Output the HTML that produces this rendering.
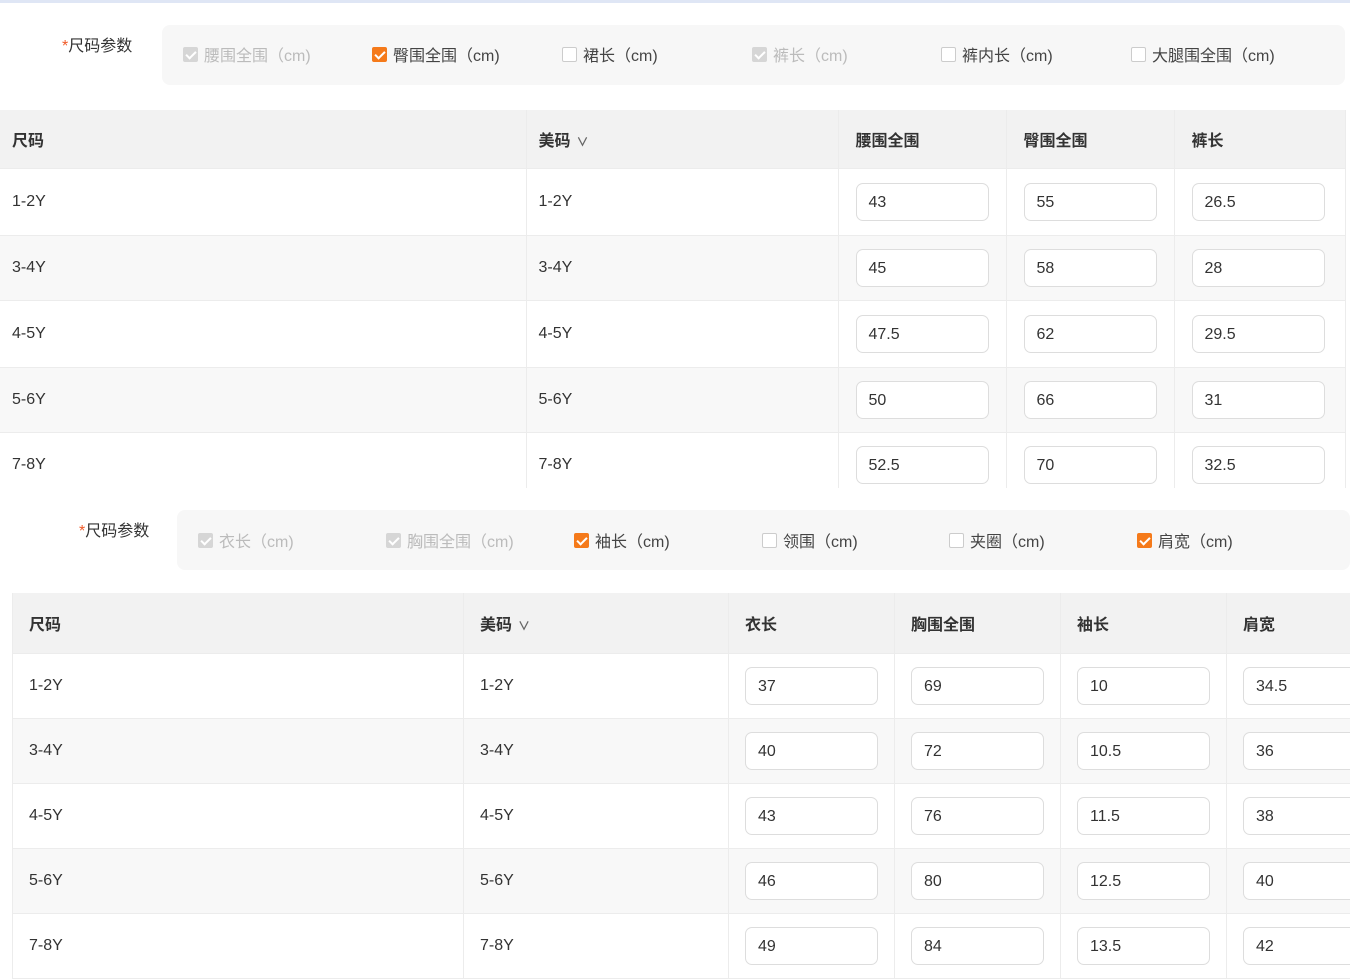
<!DOCTYPE html>
<html><head><meta charset="utf-8"><style>
*{margin:0;padding:0;box-sizing:border-box}
body{width:1350px;height:965px;overflow:hidden;background:#fff;font-family:"Liberation Sans","Noto Sans CJK SC",sans-serif;color:#333;position:relative}
.a{position:absolute}
.lbl{font-size:16px;color:#333}
.lbl b{color:#f05a28;font-weight:normal}
.band{background:#f7f7f7;border-radius:8px}
.cb{position:absolute;font-size:16px;color:#444;display:flex;align-items:center;white-space:nowrap}
.cb i{display:inline-block;width:15px;height:15px;border:1px solid #ccc;border-radius:2px;background:#fff;margin-right:6px;position:relative}
.cb.dis{color:#bbb}.cb.dis i{background:#d6d6d6;border-color:#d6d6d6}
.cb.on i{background:#f57a1a;border-color:#f57a1a}
.cb.on i:after,.cb.dis i:after{content:"";position:absolute;left:4px;top:1px;width:4px;height:8px;border:solid #fff;border-width:0 2px 2px 0;transform:rotate(45deg)}
table{position:absolute;border-collapse:collapse;table-layout:fixed;font-size:16px}
td,th{border-right:1px solid #ececec;border-bottom:1px solid #ececec;text-align:left;padding-left:12px;color:#333}
th{background:#f2f2f2;font-weight:bold;font-size:16px}
tr.g td{background:#f8f8f8}
.in{width:133px;height:38px;border:1px solid #ddd;border-radius:7px;background:#fff;padding-left:12px;line-height:38px;font-size:16px}
.ch{font-size:12px;color:#666;margin-left:6px}
</style></head><body>
<div class="a" style="left:0;top:0;width:1350px;height:3px;background:#dfe6f5"></div>
<div class="a lbl" style="left:62px;top:32px"><b>*</b>尺码参数</div>
<div class="a band" style="left:162px;top:25px;width:1183px;height:60px"></div>
<div class="cb dis" style="left:183px;top:42px"><i></i>腰围全围（cm)</div>
<div class="cb on" style="left:372px;top:42px"><i></i>臀围全围（cm)</div>
<div class="cb" style="left:562px;top:42px"><i></i>裙长（cm)</div>
<div class="cb dis" style="left:752px;top:42px"><i></i>裤长（cm)</div>
<div class="cb" style="left:941px;top:42px"><i></i>裤内长（cm)</div>
<div class="cb" style="left:1131px;top:42px"><i></i>大腿围全围（cm)</div>

<table style="left:0;top:110px;width:1345px">
<colgroup><col style="width:526px"><col style="width:312px"><col style="width:168px"><col style="width:168px"><col style="width:171px"></colgroup>
<tr style="height:58px"><th>尺码</th><th>美码<span class="ch">∨</span></th><th style="padding-left:17px">腰围全围</th><th style="padding-left:17px">臀围全围</th><th style="padding-left:17px">裤长</th></tr>
<tr style="height:67px"><td>1-2Y</td><td>1-2Y</td><td style="padding-left:17px"><div class="in">43</div></td><td style="padding-left:17px"><div class="in">55</div></td><td style="padding-left:17px"><div class="in">26.5</div></td></tr>
<tr class="g" style="height:65px"><td>3-4Y</td><td>3-4Y</td><td style="padding-left:17px"><div class="in">45</div></td><td style="padding-left:17px"><div class="in">58</div></td><td style="padding-left:17px"><div class="in">28</div></td></tr>
<tr style="height:67px"><td>4-5Y</td><td>4-5Y</td><td style="padding-left:17px"><div class="in">47.5</div></td><td style="padding-left:17px"><div class="in">62</div></td><td style="padding-left:17px"><div class="in">29.5</div></td></tr>
<tr class="g" style="height:65px"><td>5-6Y</td><td>5-6Y</td><td style="padding-left:17px"><div class="in">50</div></td><td style="padding-left:17px"><div class="in">66</div></td><td style="padding-left:17px"><div class="in">31</div></td></tr>
<tr style="height:66px"><td>7-8Y</td><td>7-8Y</td><td style="padding-left:17px"><div class="in">52.5</div></td><td style="padding-left:17px"><div class="in">70</div></td><td style="padding-left:17px"><div class="in">32.5</div></td></tr>
</table>
<div class="a" style="left:0;top:488px;width:1350px;height:477px;background:#fff"></div>

<div class="a lbl" style="left:79px;top:517px"><b>*</b>尺码参数</div>
<div class="a band" style="left:177px;top:510px;width:1173px;height:60px"></div>
<div class="cb dis" style="left:198px;top:528px"><i></i>衣长（cm)</div>
<div class="cb dis" style="left:386px;top:528px"><i></i>胸围全围（cm)</div>
<div class="cb on" style="left:574px;top:528px"><i></i>袖长（cm)</div>
<div class="cb" style="left:762px;top:528px"><i></i>领围（cm)</div>
<div class="cb" style="left:949px;top:528px"><i></i>夹圈（cm)</div>
<div class="cb on" style="left:1137px;top:528px"><i></i>肩宽（cm)</div>

<table style="left:12px;top:593px;width:1350px;border-left:1px solid #ececec">
<colgroup><col style="width:451px"><col style="width:265px"><col style="width:166px"><col style="width:166px"><col style="width:166px"><col style="width:136px"></colgroup>
<tr style="height:60px"><th style="padding-left:16px">尺码</th><th style="padding-left:16px">美码<span class="ch">∨</span></th><th style="padding-left:16px">衣长</th><th style="padding-left:16px">胸围全围</th><th style="padding-left:16px">袖长</th><th style="padding-left:16px">肩宽</th></tr>
<tr style="height:65px"><td style="padding-left:16px">1-2Y</td><td style="padding-left:16px">1-2Y</td><td style="padding-left:16px"><div class="in">37</div></td><td style="padding-left:16px"><div class="in">69</div></td><td style="padding-left:16px"><div class="in">10</div></td><td style="padding-left:16px"><div class="in">34.5</div></td></tr>
<tr class="g" style="height:65px"><td style="padding-left:16px">3-4Y</td><td style="padding-left:16px">3-4Y</td><td style="padding-left:16px"><div class="in">40</div></td><td style="padding-left:16px"><div class="in">72</div></td><td style="padding-left:16px"><div class="in">10.5</div></td><td style="padding-left:16px"><div class="in">36</div></td></tr>
<tr style="height:65px"><td style="padding-left:16px">4-5Y</td><td style="padding-left:16px">4-5Y</td><td style="padding-left:16px"><div class="in">43</div></td><td style="padding-left:16px"><div class="in">76</div></td><td style="padding-left:16px"><div class="in">11.5</div></td><td style="padding-left:16px"><div class="in">38</div></td></tr>
<tr class="g" style="height:65px"><td style="padding-left:16px">5-6Y</td><td style="padding-left:16px">5-6Y</td><td style="padding-left:16px"><div class="in">46</div></td><td style="padding-left:16px"><div class="in">80</div></td><td style="padding-left:16px"><div class="in">12.5</div></td><td style="padding-left:16px"><div class="in">40</div></td></tr>
<tr style="height:65px"><td style="padding-left:16px">7-8Y</td><td style="padding-left:16px">7-8Y</td><td style="padding-left:16px"><div class="in">49</div></td><td style="padding-left:16px"><div class="in">84</div></td><td style="padding-left:16px"><div class="in">13.5</div></td><td style="padding-left:16px"><div class="in">42</div></td></tr>
</table>
</body></html>
